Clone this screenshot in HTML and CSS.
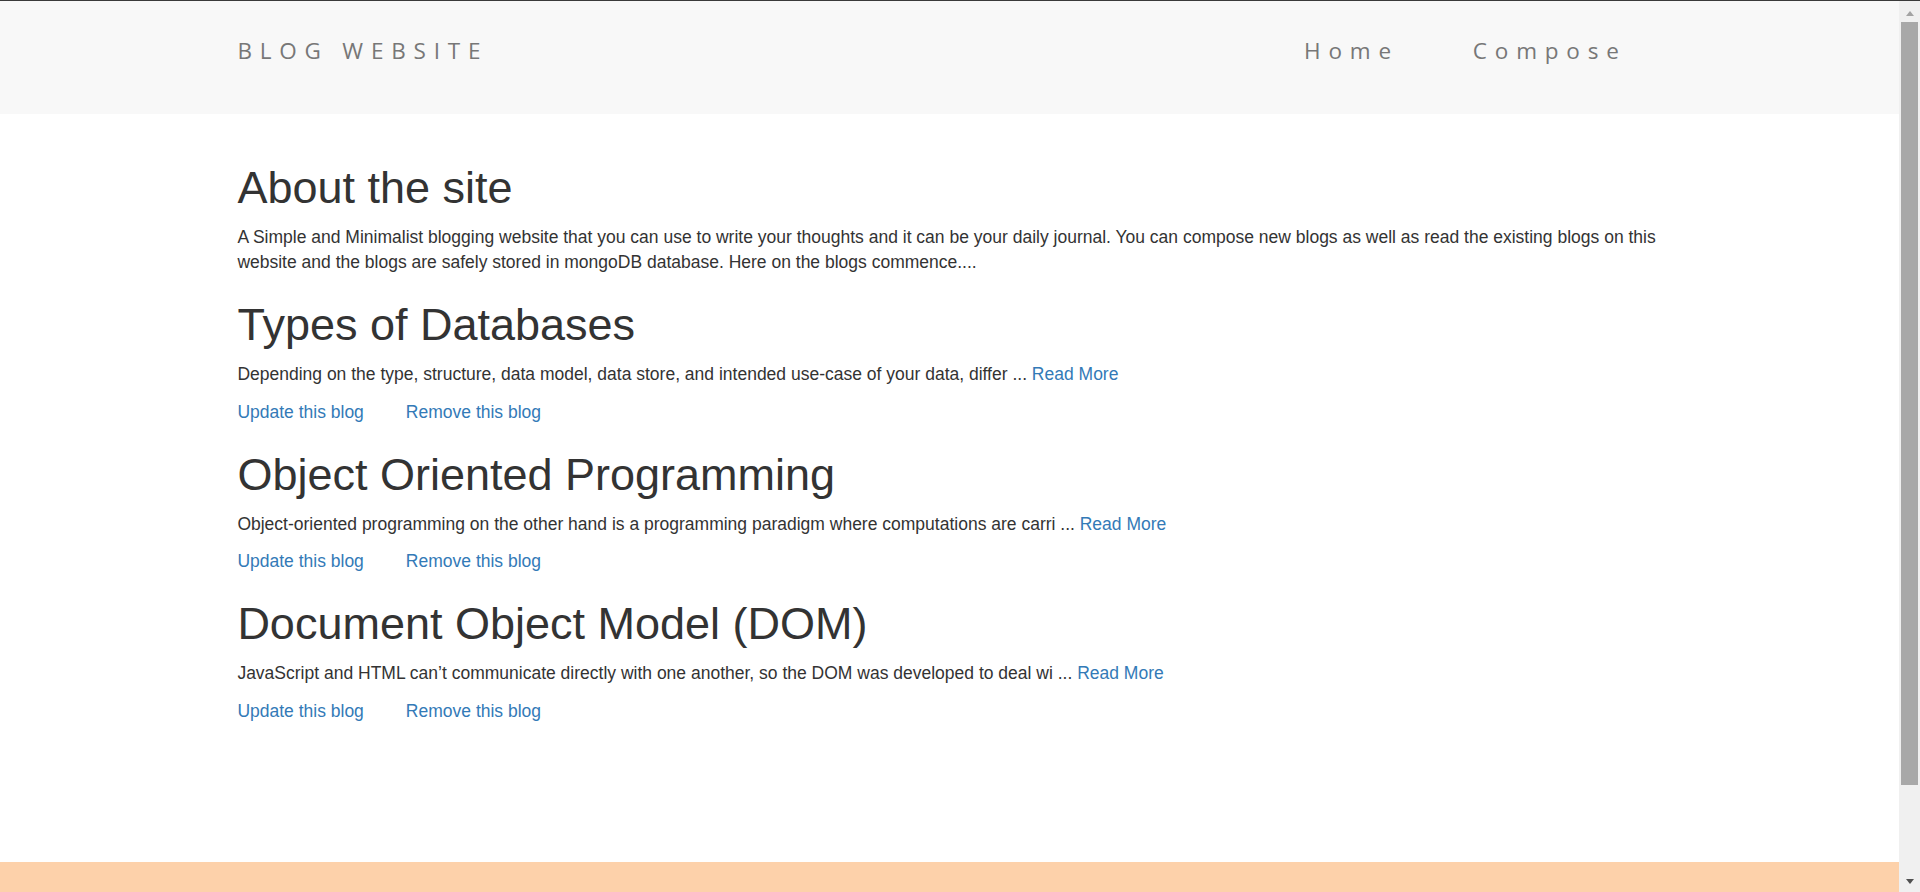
FILE: index.html
```html
<!DOCTYPE html>
<html lang="en">
<head>
<meta charset="utf-8">
<title>Blog Website</title>
<link rel="stylesheet" href="styles.css">
</head>
<body>
<div class="window">
  <div class="page">
    <nav class="navbar">
      <div class="wrap navbar-inner">
        <a class="brand" href="#">BLOG WEBSITE</a>
        <ul class="nav">
          <li><a href="#">Home</a></li>
          <li><a href="#">Compose</a></li>
        </ul>
      </div>
    </nav>
    <main class="wrap content">
      <h1>About the site</h1>
      <p>A Simple and Minimalist blogging website that you can use to write your thoughts and it can be your daily journal. You can compose new blogs as well as read the existing blogs on this website and the blogs are safely stored in mongoDB database. Here on the blogs commence....</p>

      <h1>Types of Databases</h1>
      <p>Depending on the type, structure, data model, data store, and intended use-case of your data, differ ... <a href="#">Read More</a></p>
      <p class="actions"><a href="#">Update this blog</a><a href="#">Remove this blog</a></p>

      <h1>Object Oriented Programming</h1>
      <p>Object-oriented programming on the other hand is a programming paradigm where computations are carri ... <a href="#">Read More</a></p>
      <p class="actions"><a href="#">Update this blog</a><a href="#">Remove this blog</a></p>

      <h1>Document Object Model (DOM)</h1>
      <p>JavaScript and HTML can’t communicate directly with one another, so the DOM was developed to deal wi ... <a href="#">Read More</a></p>
      <p class="actions"><a href="#">Update this blog</a><a href="#">Remove this blog</a></p>
    </main>
    <footer class="footer"></footer>
  </div>
  <div class="scrollbar">
    <div class="arrow arrow-up"></div>
    <div class="thumb"></div>
    <div class="track-rest"></div>
    <div class="arrow arrow-down"></div>
  </div>
</div>
</body>
</html>
```

FILE: styles.css
```css
* { box-sizing: border-box; }

html, body {
  margin: 0;
  padding: 0;
  height: 892px;
  overflow: hidden;
}

body {
  font-family: "Liberation Sans", Arial, sans-serif;
  font-size: 17.5px;
  line-height: 25px;
  color: #333333;
  background: #ffffff;
}

.window {
  display: flex;
  height: 892px;
  border-top: 1px solid #3a3a3a;
}

.page {
  flex: 1;
  display: flex;
  flex-direction: column;
  min-width: 0;
}

.wrap {
  width: 75%;
  margin: 0 auto;
}

/* Navbar */
.navbar {
  background: #f8f8f8;
  height: 113px;
  flex-shrink: 0;
}

.navbar-inner {
  display: flex;
  justify-content: space-between;
  align-items: flex-start;
  padding-top: 37px;
}

.brand,
.nav a {
  font-family: "Open Sans", "Noto Sans", sans-serif;
  font-size: 22.5px;
  line-height: 25px;
  letter-spacing: 7.8px;
  color: #777777;
  text-decoration: none;
}

.nav {
  list-style: none;
  margin: 0;
  padding: 0 35px 0 0;
  display: flex;
  gap: 74px;
}

/* Content */
.content {
  flex: 1;
  padding-top: 24px;
}

h1 {
  font-family: "Liberation Sans", Arial, sans-serif;
  font-size: 45px;
  line-height: 49.5px;
  font-weight: 400;
  margin: 25px 0 12.5px;
  color: #333333;
}

p {
  margin: 0 0 12.5px;
}

a {
  color: #337ab7;
  text-decoration: none;
}

.actions {
  display: flex;
  gap: 42px;
}

/* Footer */
.footer {
  height: 30px;
  flex-shrink: 0;
  background: #fdd1aa;
}

/* Fake scrollbar */
.scrollbar {
  width: 21px;
  flex-shrink: 0;
  background: #f0f0f0;
  display: flex;
  flex-direction: column;
  align-items: center;
}

.arrow {
  width: 0;
  height: 0;
  border-left: 4.5px solid transparent;
  border-right: 4.5px solid transparent;
}

.arrow-up {
  margin-top: 10px;
  border-bottom: 5px solid #a3a3a3;
}

.thumb {
  margin-top: 6px;
  width: 17px;
  height: 763px;
  background: #a8a8a8;
}

.track-rest {
  flex: 1;
}

.arrow-down {
  margin-bottom: 8px;
  border-top: 5px solid #505050;
}
```
